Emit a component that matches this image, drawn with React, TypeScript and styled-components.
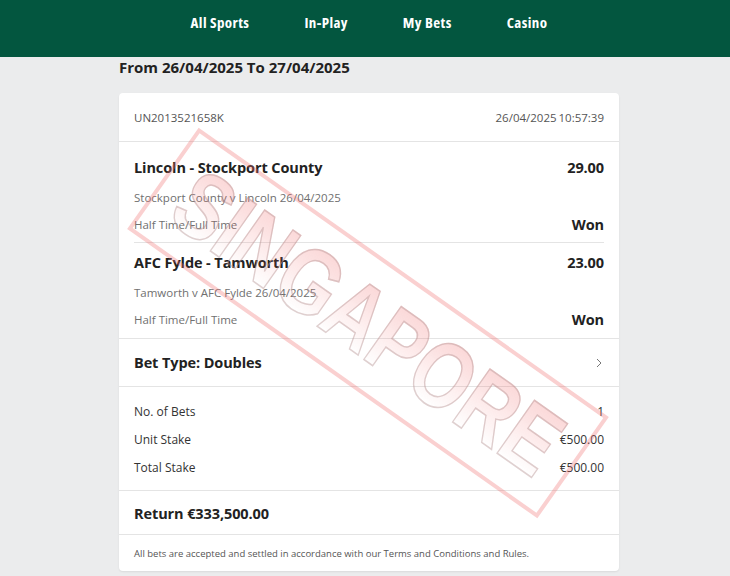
import React from "react";
import styled, { createGlobalStyle } from "styled-components";

const Global = createGlobalStyle`
  html, body { margin: 0; padding: 0; background: #ebeced; }
  body { font-family: "Open Sans", "Noto Sans", sans-serif; color: #222; }
  * { box-sizing: border-box; }
`;

const Page = styled.div`
  position: relative;
  width: 730px;
  min-height: 576px;
  background: #ebeced;
  overflow: hidden;
`;

const Header = styled.header`
  height: 57px;
  background: #03563f;
  display: flex;
  justify-content: center;
  padding-left: 8px;
`;

const Nav = styled.nav`
  display: flex;
  gap: 55px;
  padding-top: 13px;
`;

const NavItem = styled.a`
  color: #fff;
  font-family: "Open Sans", "Roboto", sans-serif;
  font-stretch: 80%;
  font-weight: 700;
  font-size: 15px;
  line-height: 18px;
  letter-spacing: 0.4px;
  text-decoration: none;
`;

const Main = styled.main`
  width: 500px;
  margin: 0 auto;
  position: relative;
  left: 4px;
`;

const Heading = styled.h1`
  margin: 0;
  font-size: 15px;
  line-height: 21px;
  font-weight: 700;
  color: #222;
`;

const Card = styled.section`
  margin-top: 15px;
  background: #fff;
  border-radius: 4px;
  box-shadow: 0 1px 2px rgba(0, 0, 0, 0.08);
  overflow: hidden;
`;

const RefRow = styled.div`
  height: 49px;
  display: flex;
  align-items: center;
  justify-content: space-between;
  padding: 0 15px;
  border-bottom: 1px solid #e4e4e4;
  font-size: 11.5px;
  color: #555;
`;

const Selections = styled.div`
  padding: 6px 15px 1px;
  border-bottom: 1px solid #e4e4e4;
`;

const Selection = styled.div<{ $last?: boolean }>`
  padding: 10px 0 7px;
  border-bottom: ${(p) => (p.$last ? "none" : "1px solid #e4e4e4")};
`;

const Line = styled.div<{ $mt?: number }>`
  display: flex;
  justify-content: space-between;
  align-items: center;
  line-height: 20px;
  margin-top: ${(p) => p.$mt ?? 0}px;
`;

const Title = styled.span`
  font-size: 14.5px;
  font-weight: 700;
  color: #222;
  letter-spacing: -0.1px;
`;

const Sub = styled.span`
  font-size: 11.5px;
  color: #707070;
`;

const TypeRow = styled.div`
  height: 48px;
  display: flex;
  align-items: center;
  justify-content: space-between;
  padding: 0 15px;
  border-bottom: 1px solid #e4e4e4;
`;

const Chevron = styled.svg`
  width: 8px;
  height: 10px;
  margin-right: 1px;
`;

const Summary = styled.div`
  padding: 15px 15px 12px;
  display: flex;
  flex-direction: column;
  gap: 8px;
  border-bottom: 1px solid #e4e4e4;
`;

const SumLabel = styled.span`
  font-size: 12px;
  color: #333;
`;

const ReturnRow = styled.div`
  height: 44px;
  display: flex;
  align-items: center;
  padding: 1px 15px 0;
  border-bottom: 1px solid #e4e4e4;
`;

const Disclaimer = styled.div`
  height: 36px;
  display: flex;
  align-items: center;
  padding: 0 15px;
  font-size: 9.5px;
  color: #555;
`;

const Stamp = styled.div`
  position: absolute;
  left: 117px;
  top: 261px;
  width: 502px;
  height: 124px;
  transform: rotate(35.2deg);
  border: 4px solid rgba(238, 110, 110, 0.32);
  display: flex;
  align-items: center;
  justify-content: center;
  pointer-events: none;
`;

const StampText = styled.span`
  display: inline-block;
  font-family: "Liberation Sans", Arial, sans-serif;
  font-weight: 700;
  font-size: 94px;
  line-height: 1;
  transform: scaleX(0.8);
  background: linear-gradient(180deg, rgba(240, 110, 110, 0.32) 0%, rgba(255, 255, 255, 0) 85%);
  -webkit-background-clip: text;
  background-clip: text;
  color: transparent;
  -webkit-text-stroke: 1.6px rgba(185, 150, 150, 0.45);
  white-space: nowrap;
`;

export default function App() {
  return (
    <Page>
      <Global />
      <Header>
        <Nav>
          <NavItem>All Sports</NavItem>
          <NavItem>In-Play</NavItem>
          <NavItem>My Bets</NavItem>
          <NavItem>Casino</NavItem>
        </Nav>
      </Header>
      <Main>
        <Heading>From 26/04/2025 To 27/04/2025</Heading>
        <Card>
          <RefRow>
            <span>UN2013521658K</span>
            <span>26/04/2025{"\u2009"}10:57:39</span>
          </RefRow>
          <Selections>
            <Selection>
              <Line>
                <Title>Lincoln - Stockport County</Title>
                <Title>29.00</Title>
              </Line>
              <Line $mt={10}>
                <Sub>Stockport County v Lincoln 26/04/2025</Sub>
              </Line>
              <Line $mt={7}>
                <Sub>Half Time/Full Time</Sub>
                <Title>Won</Title>
              </Line>
            </Selection>
            <Selection $last>
              <Line>
                <Title>AFC Fylde - Tamworth</Title>
                <Title>23.00</Title>
              </Line>
              <Line $mt={10}>
                <Sub>Tamworth v AFC Fylde 26/04/2025</Sub>
              </Line>
              <Line $mt={7}>
                <Sub>Half Time/Full Time</Sub>
                <Title>Won</Title>
              </Line>
            </Selection>
          </Selections>
          <TypeRow>
            <Title>Bet Type: Doubles</Title>
            <Chevron viewBox="0 0 8 10">
              <path d="M2 1 L6 5 L2 9" fill="none" stroke="#777" strokeWidth="1" />
            </Chevron>
          </TypeRow>
          <Summary>
            <Line>
              <SumLabel>No. of Bets</SumLabel>
              <SumLabel>1</SumLabel>
            </Line>
            <Line>
              <SumLabel>Unit Stake</SumLabel>
              <SumLabel>€500.00</SumLabel>
            </Line>
            <Line>
              <SumLabel>Total Stake</SumLabel>
              <SumLabel>€500.00</SumLabel>
            </Line>
          </Summary>
          <ReturnRow>
            <Title>Return €333,500.00</Title>
          </ReturnRow>
          <Disclaimer>
            All bets are accepted and settled in accordance with our Terms and Conditions and Rules.
          </Disclaimer>
        </Card>
      </Main>
      <Stamp>
        <StampText>SINGAPORE</StampText>
      </Stamp>
    </Page>
  );
}
